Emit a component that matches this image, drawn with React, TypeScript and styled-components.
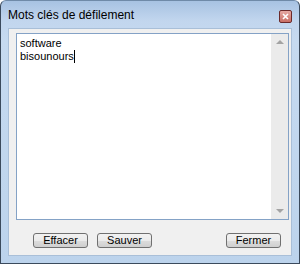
import React from 'react';
import styled, { createGlobalStyle } from 'styled-components';

const GlobalStyle = createGlobalStyle`
  html, body {
    margin: 0;
    padding: 0;
    background: #ffffff;
  }
  body {
    font-family: 'Liberation Sans', Arial, sans-serif;
  }
`;

const Window = styled.div`
  width: 300px;
  height: 264px;
  box-sizing: border-box;
  display: flex;
  flex-direction: column;
  border: 1px solid #3b4a5c;
  border-top-color: #6f8aa8;
  border-radius: 6px 6px 0 0;
  background: linear-gradient(180deg, #a7c2e2 0px, #c2d6ee 20px, #c6daf0 40px, #bcd3ec 100%);
  overflow: hidden;
`;

const TitleBar = styled.div`
  height: 27px;
  flex: none;
  display: flex;
  align-items: center;
  justify-content: space-between;
  padding: 0 7px 0 7px;
`;

const Title = styled.span`
  font-size: 12px;
  color: #000;
  padding-top: 1px;
`;

const CloseButton = styled.div`
  width: 11px;
  height: 11px;
  margin-top: 3px;
  border: 1px solid #6b2a2a;
  border-radius: 2px;
  background: linear-gradient(180deg, #e6a9a3 0%, #c96e64 100%);
  display: flex;
  align-items: center;
  justify-content: center;
`;

const Body = styled.div`
  flex: 1;
  margin: 0 7px 7px 7px;
  background: #f0f0f0;
  border: 1px solid #a9bfd8;
  display: flex;
  flex-direction: column;
  padding: 4px 2px 7px 7px;
`;

const TextBox = styled.div`
  height: 185px;
  flex: none;
  display: flex;
  border: 1px solid #84a2c6;
  background: #ffffff;
`;

const TextContent = styled.div`
  flex: 1;
  padding: 3px 3px;
  font-size: 11px;
  line-height: 13px;
  color: #000;
`;

const Caret = styled.span`
  display: inline-block;
  width: 1px;
  height: 13px;
  background: #000;
  vertical-align: -3px;
`;

const ScrollBar = styled.div`
  width: 17px;
  display: flex;
  flex-direction: column;
  justify-content: space-between;
  align-items: center;
  background: #ebebeb;
  padding: 6px 0;
`;

const Arrow = styled.div<{ $down?: boolean }>`
  width: 0;
  height: 0;
  border-left: 4px solid transparent;
  border-right: 4px solid transparent;
  ${p => (p.$down ? 'border-top: 4px solid #a3a3a3;' : 'border-bottom: 4px solid #a3a3a3;')}
`;

const ButtonRow = styled.div`
  flex: 1;
  display: flex;
  align-items: flex-end;
  padding: 0 8px 0 17px;
  gap: 9px;
`;

const Button = styled.button<{ $push?: boolean }>`
  width: 55px;
  height: 15px;
  padding: 0;
  margin-left: ${p => (p.$push ? 'auto' : '0')};
  font-family: 'Liberation Sans', Arial, sans-serif;
  font-size: 11px;
  line-height: 13px;
  color: #000;
  border: 1px solid #707070;
  border-radius: 3px;
  background: linear-gradient(180deg, #f2f2f2 0%, #ebebeb 50%, #dddddd 51%, #cfcfcf 100%);
`;

export default function App() {
  return (
    <>
      <GlobalStyle />
      <Window>
        <TitleBar>
          <Title>Mots clés de défilement</Title>
          <CloseButton>
            <svg width="7" height="7" viewBox="0 0 7 7">
              <path d="M1 1 L6 6 M6 1 L1 6" stroke="#ffffff" strokeWidth="1.6" />
            </svg>
          </CloseButton>
        </TitleBar>
        <Body>
          <TextBox>
            <TextContent>
              software
              <br />
              bisounours
              <Caret />
            </TextContent>
            <ScrollBar>
              <Arrow />
              <Arrow $down />
            </ScrollBar>
          </TextBox>
          <ButtonRow>
            <Button>Effacer</Button>
            <Button>Sauver</Button>
            <Button $push>Fermer</Button>
          </ButtonRow>
        </Body>
      </Window>
    </>
  );
}
